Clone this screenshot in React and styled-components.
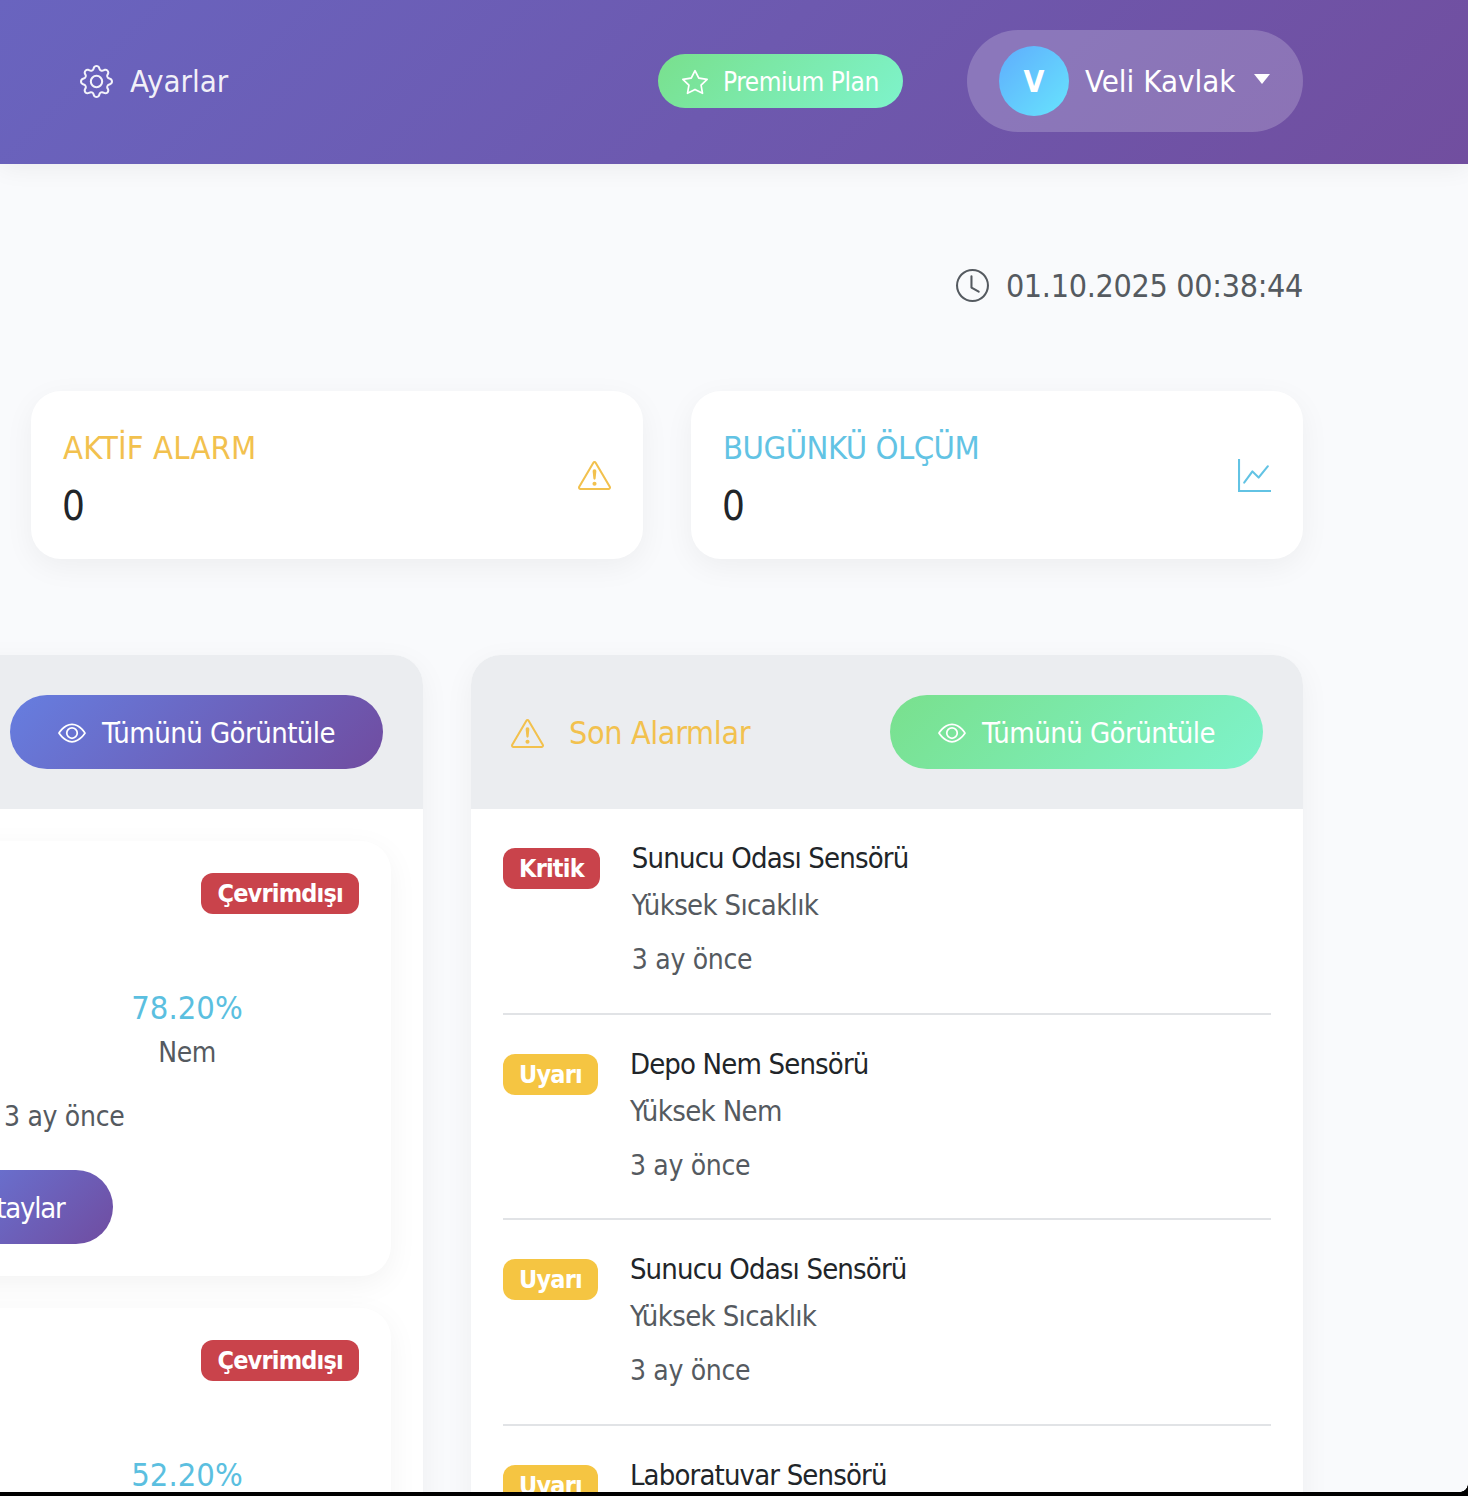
import React from 'react'
import styled, { createGlobalStyle } from 'styled-components'
import {
  BsGear,
  BsStar,
  BsClock,
  BsExclamationTriangle,
  BsGraphUp,
  BsEye,
} from 'react-icons/bs'

const GlobalStyle = createGlobalStyle`
  html, body {
    margin: 0;
    padding: 0;
    height: 100%;
    overflow: hidden;
    background: #f9fafc;
  }
  body {
    font-family: 'DejaVu Sans Condensed', 'DejaVu Sans', sans-serif;
    font-stretch: condensed;
    color: #212529;
  }
`

const Page = styled.div`
  width: 1468px;
  height: 1496px;
  overflow: hidden;
  position: relative;
  background: #f9fafc;
`

const Navbar = styled.header`
  height: 164px;
  padding: 0 165px 2px 80px;
  box-sizing: border-box;
  display: flex;
  align-items: center;
  background: linear-gradient(135deg, #6964bf 0%, #714e9f 100%);
  box-shadow: 0 4px 24px rgba(0, 0, 0, 0.06);
  position: relative;
`

const NavLink = styled.a`
  display: flex;
  align-items: center;
  gap: 17px;
  color: rgba(255, 255, 255, 0.92);
  font-size: 31px;
  svg {
    font-size: 33px;
  }
`

const PremiumBadge = styled.div`
  margin-left: auto;
  height: 54px;
  width: 245px;
  box-sizing: border-box;
  padding: 2px 0 0 24px;
  border-radius: 27px;
  display: flex;
  align-items: center;
  gap: 15px;
  color: #fff;
  font-size: 26px;
  letter-spacing: -0.45px;
  background: linear-gradient(135deg, #79e08d 0%, #7ef3cb 100%);
  svg {
    font-size: 26px;
  }
`

const UserPill = styled.div`
  margin-left: 64px;
  height: 102px;
  width: 336px;
  box-sizing: border-box;
  padding-left: 32px;
  border-radius: 51px;
  background: rgba(255, 255, 255, 0.2);
  display: flex;
  align-items: center;
  color: #fff;
  font-size: 31px;
`

const Avatar = styled.div`
  width: 70px;
  height: 70px;
  border-radius: 50%;
  margin-right: 16px;
  display: flex;
  align-items: center;
  justify-content: center;
  font-weight: 700;
  font-size: 30px;
  background: linear-gradient(135deg, #5fadfd 0%, #67e4fd 100%);
`

const Caret = styled.span`
  margin-left: 18px;
  border-top: 10px solid #fff;
  border-left: 8.5px solid transparent;
  border-right: 8.5px solid transparent;
  margin-top: -4px;
`

const Main = styled.main`
  width: 1303px;
`

const DateRow = styled.div`
  height: 227px;
  box-sizing: border-box;
  padding-top: 103px;
  display: flex;
  justify-content: flex-end;
  align-items: flex-start;
  gap: 17px;
  color: #555a60;
  font-size: 32px;
  line-height: 38px;
  letter-spacing: -0.32px;
  svg {
    font-size: 33px;
    margin-top: 2px;
  }
`

const StatRow = styled.div`
  display: flex;
  justify-content: flex-end;
  gap: 48px;
`

const StatCard = styled.div`
  width: 612px;
  height: 168px;
  box-sizing: border-box;
  padding: 32px;
  background: #fff;
  border-radius: 30px;
  box-shadow: 0 8px 30px rgba(0, 0, 0, 0.05);
  display: flex;
  align-items: center;
  justify-content: space-between;
`

const StatText = styled.div`
  padding-top: 7px;
`

const StatTitle = styled.div`
  font-size: 32.5px;
  line-height: 48px;
  letter-spacing: ${p => p.$spacing}px;
  color: ${p => p.$color};
`

const StatValue = styled.div`
  font-size: 40px;
  line-height: 56px;
  margin-top: 6px;
  margin-left: -1px;
  color: #212529;
`

const StatIcon = styled.div`
  display: flex;
  font-size: 33px;
  color: ${p => p.$color};
`

const PanelRow = styled.div`
  margin-top: 96px;
  display: flex;
  gap: 48px;
  margin-left: -409px;
  width: 1712px;
`

const Panel = styled.section`
  flex: 1;
  height: 1000px;
  background: #fff;
  border-radius: 30px 30px 0 0;
  overflow: hidden;
  box-shadow: 0 8px 30px rgba(0, 0, 0, 0.05);
`

const PanelHeader = styled.div`
  height: 154px;
  box-sizing: border-box;
  padding: 0 40px;
  background: #ebedf0;
  display: flex;
  align-items: center;
  justify-content: ${p => (p.$end ? 'flex-end' : 'space-between')};
`

const PanelTitle = styled.h2`
  margin: 0;
  padding-top: 2px;
  display: flex;
  align-items: center;
  gap: 25px;
  font-size: 32px;
  font-weight: 400;
  letter-spacing: -0.35px;
  color: #f2c14e;
  svg {
    font-size: 33px;
  }
`

const PillButton = styled.button`
  height: 74px;
  width: ${p => p.$width}px;
  flex: none;
  border: 0;
  border-radius: 37px;
  padding: 2px 0 0;
  display: flex;
  align-items: center;
  justify-content: center;
  gap: 16px;
  color: #fff;
  font-family: inherit;
  font-stretch: condensed;
  font-size: 29px;
  letter-spacing: -0.55px;
  background: ${p =>
    p.$green
      ? 'linear-gradient(135deg, #79e08d 0%, #7ef3cb 100%)'
      : 'linear-gradient(135deg, #667ee0 0%, #704ca0 100%)'};
  svg {
    font-size: 28px;
  }
`

const DetailButton = styled(PillButton)`
  margin-top: 31px;
  margin-left: 259px;
  letter-spacing: -1.2px;
`

const PanelBody = styled.div`
  padding: 32px;
`

const SensorCard = styled.div`
  height: 435px;
  box-sizing: border-box;
  margin-bottom: 32px;
  background: #fff;
  border-radius: 30px;
  box-shadow: 0 8px 30px rgba(0, 0, 0, 0.05);
  padding: 32px;
`

const BadgeLine = styled.div`
  display: flex;
  justify-content: flex-end;
`

const StatusBadge = styled.span`
  display: inline-block;
  height: 41px;
  line-height: 41px;
  padding: 0 16px;
  border-radius: 12px;
  font-size: 25px;
  font-weight: 700;
  letter-spacing: -0.8px;
  color: #fff;
  background: ${p => p.$bg};
`

const ReadingGrid = styled.div`
  margin-top: 72px;
  display: grid;
  grid-template-columns: 1fr 1fr;
  column-gap: 16px;
`

const Reading = styled.div`
  grid-column: 2;
  text-align: center;
`

const ReadingValue = styled.div`
  font-size: 32.5px;
  line-height: 44px;
  color: #5bbfe0;
`

const ReadingLabel = styled.div`
  font-size: 28px;
  line-height: 44px;
  margin-top: 1px;
  letter-spacing: -0.5px;
  color: #555a60;
`

const SensorTime = styled.div`
  margin-top: 20px;
  margin-left: 349px;
  font-size: 28px;
  line-height: 44px;
  letter-spacing: -0.3px;
  color: #555a60;
`

const AlarmRow = styled.div`
  display: flex;
  align-items: flex-start;
  gap: 32px;
  padding-bottom: 35.67px;
  margin-bottom: 32px;
  border-bottom: 2px solid #e1e3e6;
`

const AlarmBadgeWrap = styled.div`
  flex: none;
  padding-top: 7px;
`

const AlarmTitle = styled.div`
  font-size: 29px;
  line-height: 34px;
  letter-spacing: -0.85px;
  color: #212529;
`

const AlarmType = styled.div`
  margin-top: 13px;
  font-size: 29px;
  line-height: 34px;
  letter-spacing: -0.65px;
  color: #555a60;
`

const AlarmTime = styled.div`
  margin-top: 21px;
  font-size: 28px;
  line-height: 34px;
  letter-spacing: -0.3px;
  color: #555a60;
`

const BottomEdge = styled.div`
  position: absolute;
  left: 0;
  right: 0;
  bottom: 0;
  height: 4px;
  background: #000;
  &::before {
    content: '';
    position: absolute;
    right: 0;
    bottom: 4px;
    width: 8px;
    height: 8px;
    background: radial-gradient(circle at 0 0, transparent 7.5px, #000 8px);
  }
`

const sensors = [
  { value: '78.20%', label: 'Nem' },
  { value: '52.20%', label: 'Nem' },
]

const alarms = [
  { level: 'Kritik', bg: '#c9434b', name: 'Sunucu Odası Sensörü', type: 'Yüksek Sıcaklık' },
  { level: 'Uyarı', bg: '#f5c542', name: 'Depo Nem Sensörü', type: 'Yüksek Nem' },
  { level: 'Uyarı', bg: '#f5c542', name: 'Sunucu Odası Sensörü', type: 'Yüksek Sıcaklık' },
  { level: 'Uyarı', bg: '#f5c542', name: 'Laboratuvar Sensörü', type: 'Yüksek Sıcaklık' },
]

export default function App() {
  return (
    <Page>
      <GlobalStyle />
      <Navbar>
        <NavLink>
          <BsGear />
          Ayarlar
        </NavLink>
        <PremiumBadge>
          <BsStar />
          Premium Plan
        </PremiumBadge>
        <UserPill>
          <Avatar>V</Avatar>
          Veli Kavlak
          <Caret />
        </UserPill>
      </Navbar>
      <Main>
        <DateRow>
          <BsClock />
          01.10.2025 00:38:44
        </DateRow>
        <StatRow>
          <StatCard>
            <StatText>
              <StatTitle $color="#f2c14e" $spacing={0.15}>
                AKTİF ALARM
              </StatTitle>
              <StatValue>0</StatValue>
            </StatText>
            <StatIcon $color="#f2c14e">
              <BsExclamationTriangle />
            </StatIcon>
          </StatCard>
          <StatCard>
            <StatText>
              <StatTitle $color="#62c3e4" $spacing={-0.5}>
                BUGÜNKÜ ÖLÇÜM
              </StatTitle>
              <StatValue>0</StatValue>
            </StatText>
            <StatIcon $color="#62c3e4">
              <BsGraphUp />
            </StatIcon>
          </StatCard>
        </StatRow>
        <PanelRow>
          <Panel>
            <PanelHeader $end>
              <PillButton $width={373}>
                <BsEye />
                Tümünü Görüntüle
              </PillButton>
            </PanelHeader>
            <PanelBody>
              {sensors.map(s => (
                <SensorCard key={s.value}>
                  <BadgeLine>
                    <StatusBadge $bg="#c9434b">Çevrimdışı</StatusBadge>
                  </BadgeLine>
                  <ReadingGrid>
                    <Reading>
                      <ReadingValue>{s.value}</ReadingValue>
                      <ReadingLabel>{s.label}</ReadingLabel>
                    </Reading>
                  </ReadingGrid>
                  <SensorTime>3 ay önce</SensorTime>
                  <DetailButton $width={199}>Detaylar</DetailButton>
                </SensorCard>
              ))}
            </PanelBody>
          </Panel>
          <Panel>
            <PanelHeader>
              <PanelTitle>
                <BsExclamationTriangle />
                Son Alarmlar
              </PanelTitle>
              <PillButton $width={373} $green>
                <BsEye />
                Tümünü Görüntüle
              </PillButton>
            </PanelHeader>
            <PanelBody>
              {alarms.map((a, i) => (
                <AlarmRow key={i}>
                  <AlarmBadgeWrap>
                    <StatusBadge $bg={a.bg}>{a.level}</StatusBadge>
                  </AlarmBadgeWrap>
                  <div>
                    <AlarmTitle>{a.name}</AlarmTitle>
                    <AlarmType>{a.type}</AlarmType>
                    <AlarmTime>3 ay önce</AlarmTime>
                  </div>
                </AlarmRow>
              ))}
            </PanelBody>
          </Panel>
        </PanelRow>
      </Main>
      <BottomEdge />
    </Page>
  )
}
